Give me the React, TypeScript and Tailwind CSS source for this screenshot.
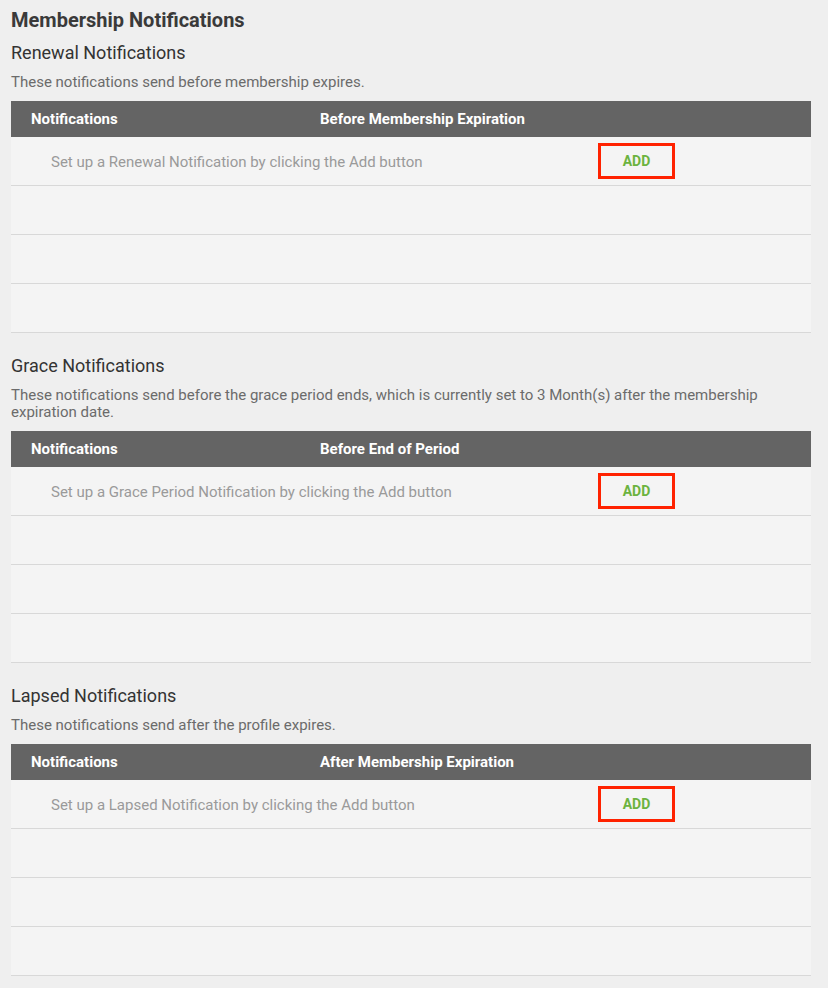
import React from "react";

type Section = {
  heading: string;
  desc: string;
  col: string;
  empty: string;
};

const sections: Section[] = [
  {
    heading: "Renewal Notifications",
    desc: "These notifications send before membership expires.",
    col: "Before Membership Expiration",
    empty: "Set up a Renewal Notification by clicking the Add button",
  },
  {
    heading: "Grace Notifications",
    desc: "These notifications send before the grace period ends, which is currently set to 3 Month(s) after the membership expiration date.",
    col: "Before End of Period",
    empty: "Set up a Grace Period Notification by clicking the Add button",
  },
  {
    heading: "Lapsed Notifications",
    desc: "These notifications send after the profile expires.",
    col: "After Membership Expiration",
    empty: "Set up a Lapsed Notification by clicking the Add button",
  },
];

function Block({ s, first }: { s: Section; first: boolean }) {
  return (
    <div className={first ? "mt-[9px]" : "mt-[21px]"}>
      <h2 className="text-[18px] leading-[24px] text-[#333333] font-normal">{s.heading}</h2>
      <p className="mt-[9px] w-[790px] text-[15px] leading-[17px] text-[#6b6b6b]">{s.desc}</p>
      <div className="mt-[10px] w-[800px]">
        <div className="grid grid-cols-[289px_1fr] h-[36px] items-center bg-[#646464] pl-5 text-[15px] font-bold text-white">
          <div>Notifications</div>
          <div>{s.col}</div>
        </div>
        <div className="grid grid-cols-[587px_77px_1fr] h-[49px] items-center bg-[#f4f4f4] border-b border-[#d8d8d8]">
          <div className="pl-10 pt-[2px] text-[15px] text-[#9a9a9a]">{s.empty}</div>
          <div className="h-[36px] border-[3px] border-[#ff2200] flex items-center justify-center text-[14px] font-bold text-[#6cb33f]">
            ADD
          </div>
          <div />
        </div>
        {[0, 1, 2].map((i) => (
          <div key={i} className="h-[49px] bg-[#f4f4f4] border-b border-[#d8d8d8]" />
        ))}
      </div>
    </div>
  );
}

export default function App() {
  return (
    <div
      className="min-h-[988px] w-[828px] bg-[#efefef] px-[11px] pt-2 pb-4"
      style={{ fontFamily: "Roboto, 'Liberation Sans', sans-serif" }}
    >
      <h1 className="text-[20px] leading-[24px] font-bold text-[#3a3a3a]">Membership Notifications</h1>
      {sections.map((s, i) => (
        <Block key={s.heading} s={s} first={i === 0} />
      ))}
    </div>
  );
}
